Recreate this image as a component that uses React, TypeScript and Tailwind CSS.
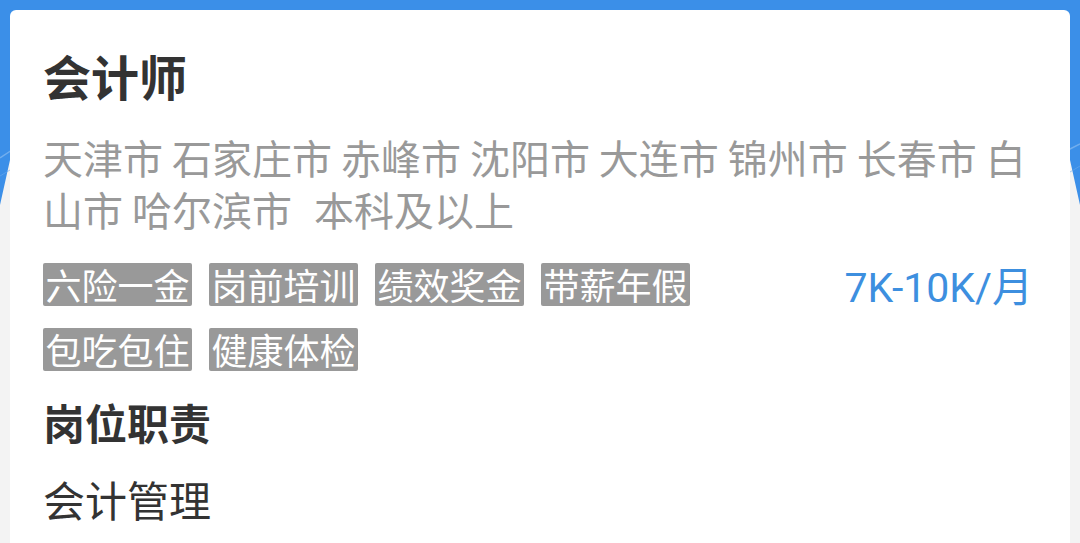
import React from "react";

const tagsRow = ["六险一金", "岗前培训", "绩效奖金", "带薪年假", "包吃包住", "健康体检"];

export default function App() {
  return (
    <div className="relative h-[543px] w-[1080px] overflow-hidden bg-[#f3f3f3] font-['Noto_Sans_CJK_SC',sans-serif]">
      <svg className="absolute left-0 top-0" width="1080" height="220" viewBox="0 0 1080 220">
        <path d="M0 0 H1080 V205 L1070 160 L540 100 L10 160 L0 205 Z" fill="#3b8fe8" />
        <path d="M0 158 L12 150" stroke="#7fb6f0" strokeWidth="1.5" opacity="0.8" />
        <path d="M1068 150 L1080 144" stroke="#7fb6f0" strokeWidth="1.5" opacity="0.8" />
        <path d="M0 176 L10 170" stroke="#6aa9ee" strokeWidth="1" opacity="0.6" />
        <path d="M1070 172 L1080 166" stroke="#6aa9ee" strokeWidth="1" opacity="0.6" />
      </svg>
      <div className="relative px-[10px] pt-[10px]">
        <div className="h-[560px] rounded-md bg-white pl-[33px] pr-[34px] pt-[37px]">
          <div className="text-[48px] font-bold leading-[56px] text-[#333333]">会计师</div>
          <div className="mt-[28px] text-[40px] leading-[52px] text-[#999999]">
            天津市 石家庄市 赤峰市 沈阳市 大连市 锦州市 长春市 白山市 哈尔滨市
            <span className="ml-[22px]">本科及以上</span>
          </div>
          <div className="mt-[28px] flex items-start justify-between">
            <div className="flex w-[760px] flex-wrap gap-x-[17px] gap-y-[22px]">
              {tagsRow.map((t) => (
                <span
                  key={t}
                  className="h-[43px] rounded-[2px] bg-[#999999] px-[2.5px] text-[36px] leading-[43px] text-white"
                >
                  {t}
                </span>
              ))}
            </div>
            <div className="mr-[3px] mt-[1px] font-['Roboto','Noto_Sans_CJK_SC',sans-serif] text-[41px] leading-[48px] text-[#3d8fdf]">
              7K-10K/月
            </div>
          </div>
          <div className="mt-[25px] text-[42px] font-bold leading-[52px] text-[#333333]">岗位职责</div>
          <div className="mt-[25px] text-[42px] leading-[52px] text-[#333333]">会计管理</div>
        </div>
      </div>
    </div>
  );
}
